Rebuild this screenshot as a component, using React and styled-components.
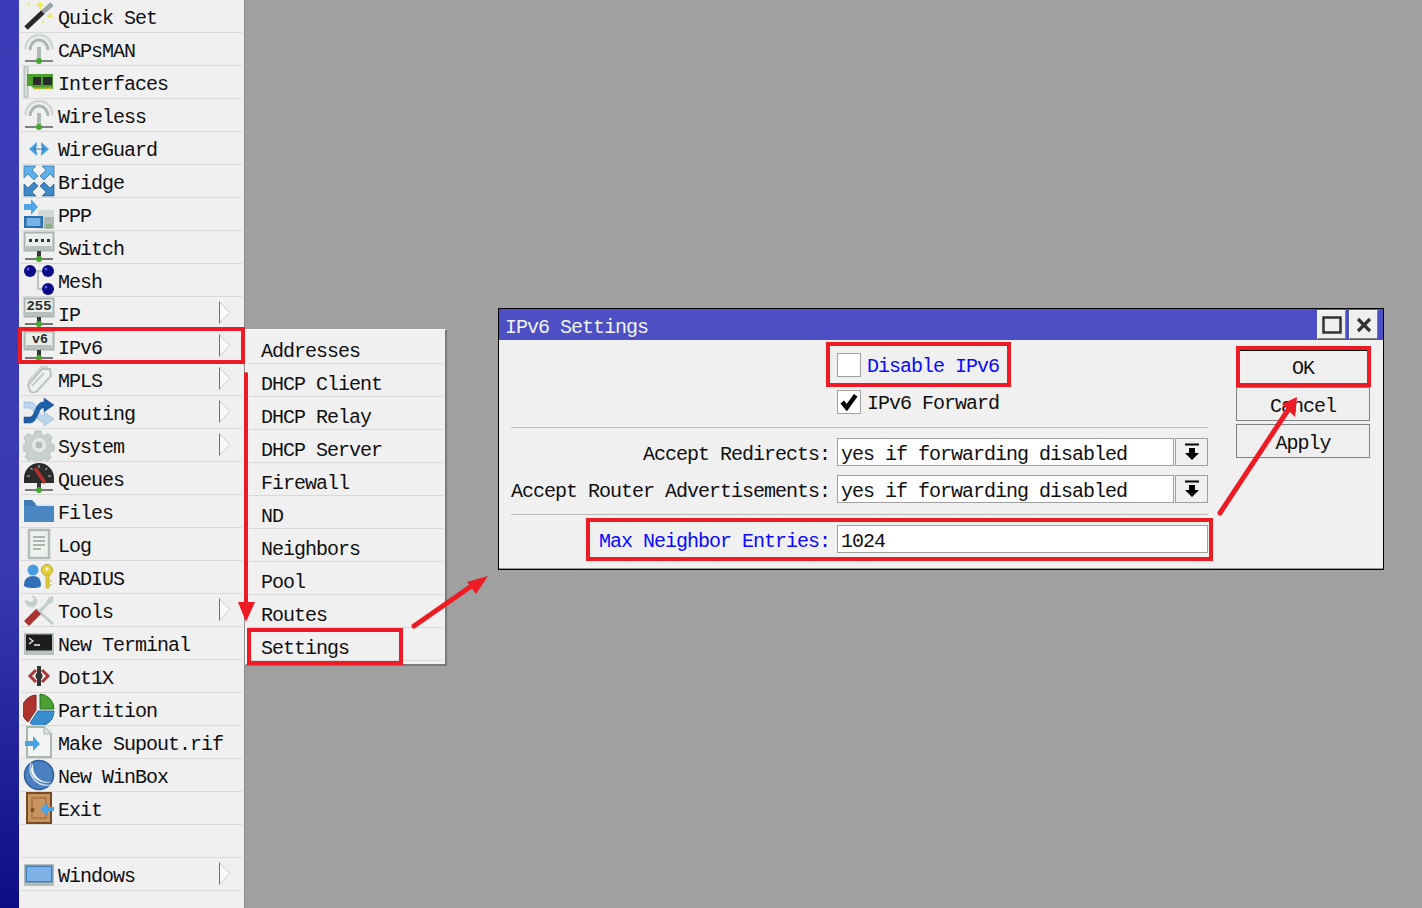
import React from 'react';
import styled, { createGlobalStyle } from 'styled-components';

const GlobalStyle = createGlobalStyle`
  html, body { margin: 0; padding: 0; background: #a0a0a0; }
  body { font-family: "Liberation Mono", "DejaVu Sans Mono", monospace; overflow: hidden; }
`;

const Page = styled.div`
  position: relative;
  display: flex;
  width: 1422px;
  height: 908px;
  overflow: hidden;
  background: #a0a0a0;
`;

const Strip = styled.div`
  width: 19px;
  flex: none;
  background: linear-gradient(180deg, #3c3cb8 0%, #3a3ab4 62%, #0d0d86 100%);
`;

const Sidebar = styled.nav`
  width: 221px;
  flex: none;
  padding: 0 2px;
  background: #f0f0f0;
  border-right: 1px solid #8c8c8c;
`;

const Row = styled.div`
  position: relative;
  display: flex;
  align-items: center;
  height: 33px;
  box-sizing: border-box;
  border-bottom: 1px solid #d8d8d8;
  color: #101010;
`;

const IconSlot = styled.svg`
  width: 32px;
  height: 32px;
  flex: none;
  margin-left: 2px;
`;

const RowLabel = styled.span`
  margin-left: 3px;
  font-size: 20px;
  letter-spacing: -1px;
  white-space: pre;
  line-height: 33px;
  padding-top: 5px;
`;

const Chevron = styled.svg`
  position: absolute;
  left: 198px;
  top: 4px;
  width: 12px;
  height: 23px;
`;

const Desktop = styled.div`
  position: relative;
  flex: 1;
`;

const SubMenu = styled.div`
  position: absolute;
  left: 0;
  top: 329px;
  width: 195px;
  height: 333px;
  padding: 1px 2px 0;
  background: #f0f0f0;
  border-top: 1px solid #fafafa;
  border-left: 1px solid #fafafa;
  border-right: 2px solid #7a7a7a;
  border-bottom: 2px solid #7a7a7a;
`;

const SubRow = styled.div`
  height: 33px;
  box-sizing: border-box;
  padding: 4px 0 0 13px;
  border-bottom: 1px solid #d8d8d8;
  font-size: 20px;
  letter-spacing: -1px;
  line-height: 33px;
  white-space: pre;
  color: #101010;
`;

const SettingsWindow = styled.section`
  position: absolute;
  left: 253px;
  top: 308px;
  width: 884px;
  height: 260px;
  background: #f0f0f0;
  border: 1px solid #000;
  display: flex;
  flex-direction: column;
`;

const TitleBar = styled.header`
  height: 31px;
  flex: none;
  display: flex;
  align-items: center;
  gap: 3px;
  padding: 0 5px 0 6px;
  background: #4c50c4;
  color: #f2f2f2;
`;

const Title = styled.span`
  flex: 1;
  font-size: 20px;
  letter-spacing: -1px;
  white-space: pre;
  padding-top: 6px;
`;

const WinButton = styled.button`
  width: 29px;
  height: 29px;
  padding: 0;
  display: flex;
  align-items: center;
  justify-content: center;
  background: #efefef;
  border: 1px solid #fff;
  border-right-color: #808080;
  border-bottom-color: #808080;
`;

const WinBody = styled.div`
  flex: 1;
  display: flex;
  padding: 0 13px 0 12px;
  border-bottom: 1px solid #9a9a9a;
`;

const Form = styled.div`
  width: 697px;
  flex: none;
  padding-top: 13px;
`;

const CheckRow = styled.label`
  display: flex;
  align-items: center;
  height: 24px;
  margin: 0 0 13px 326px;
  color: ${p => (p.$changed ? '#0a0aff' : '#101010')};
`;

const CheckBox = styled.span`
  width: 22px;
  height: 22px;
  flex: none;
  display: flex;
  align-items: center;
  justify-content: center;
  background: #fff;
  border: 1px solid #a0a0a0;
`;

const CheckText = styled.span`
  margin-left: 6px;
  font-size: 20px;
  letter-spacing: -1px;
  white-space: pre;
  padding-top: 2px;
`;

const Divider = styled.hr`
  height: 1px;
  margin: ${p => p.$top || 0}px 0 0;
  border: 0;
  background: #bdbdbd;
`;

const FieldRow = styled.div`
  display: flex;
  height: 28px;
  margin-top: ${p => p.$top}px;
`;

const FieldLabel = styled.span`
  width: 319px;
  margin-right: 7px;
  flex: none;
  text-align: right;
  font-size: 20px;
  letter-spacing: -1px;
  line-height: 34px;
  white-space: pre;
  color: ${p => (p.$changed ? '#0a0aff' : '#101010')};
`;

const Field = styled.div`
  flex: 1;
  box-sizing: border-box;
  padding-left: 3px;
  background: #fff;
  border: 1px solid #a0a0a0;
  font-size: 20px;
  letter-spacing: -1px;
  line-height: 32px;
  white-space: pre;
  color: #101010;
`;

const DropButton = styled.div`
  width: 33px;
  flex: none;
  box-sizing: border-box;
  margin-left: 1px;
  display: flex;
  align-items: center;
  justify-content: center;
  border: 1px solid #a0a0a0;
`;

const Actions = styled.div`
  width: 134px;
  flex: none;
  margin-left: 28px;
  padding-top: 10px;
  display: flex;
  flex-direction: column;
  gap: 3px;
`;

const ActionButton = styled.button`
  height: 34px;
  padding: ${p => (p.$primary ? 2 : 4)}px 0 0;
  background: #efefef;
  border: 1px solid #808080;
  border-top-color: ${p => (p.$primary ? '#000' : '#808080')};
  font-family: inherit;
  font-size: 20px;
  letter-spacing: -1px;
  color: #101010;
`;

const Annotations = styled.svg`
  position: absolute;
  left: 0;
  top: 0;
  width: 1422px;
  height: 908px;
  pointer-events: none;
`;

const IconText = styled.text`
  font-family: "Liberation Mono", monospace;
  font-weight: 700;
  font-size: 13px;
  fill: #2a2a2a;
`;

// base + pole shared by the "device on a stand" icons
const Stand = ({ y = 28, from = 20, pole = '#2e3b33' }) => (
  <>
    <path d={`M2 ${y}h28`} stroke="#4a4f4a" strokeWidth="1.5" />
    <rect x="14" y={from} width="4" height={y - from} fill={pole} />
    <circle cx="16" cy={y} r="3" fill="#4aa62e" />
  </>
);

const Antenna = () => (
  <>
    <path d="M2.500 16A13.500 14 0 0 1 29.500 16" fill="none" stroke="#cfd7d2" strokeWidth="2.500" />
    <path d="M7 17A9 10 0 0 1 25 17" fill="none" stroke="#aab5ae" strokeWidth="3" />
    <rect x="14" y="14" width="4" height="14" fill="#aebbb5" />
    <path d="M2 28h28" stroke="#55605a" strokeWidth="1.5" />
    <circle cx="16" cy="28" r="3" fill="#4aa62e" />
  </>
);

const DeviceBox = ({ children, y = 1 }) => (
  <>
    <rect x="1.500" y={y + 0.5} width="29" height="18" fill="#e9eeea" stroke="#a9b5ae" strokeWidth="2" />
    <rect x="3" y={y + 14} width="26" height="4" fill="#b7c1bb" />
    {children}
  </>
);

const icons = {
  quickset: (
    <>
      <path d="M3 28L20 12" stroke="#26282a" strokeWidth="5" />
      <path d="M20 12L29 4" stroke="#9aa3a5" strokeWidth="5" />
      <path d="M17 2v7M13.500 5h7M27 13v5M24.500 16h5" stroke="#ece85a" strokeWidth="2" />
      <path d="M5 4h2M19 22h2" stroke="#ece85a" strokeWidth="2" />
    </>
  ),
  antenna: <Antenna />,
  interfaces: (
    <>
      <rect x="1" y="1" width="4" height="30" fill="#d4dcd6" stroke="#aab5ae" />
      <path d="M4 8h26v15H11l-3-3H4z" fill="#4f9f2f" />
      <rect x="10" y="11" width="8" height="8" fill="#2b2b2b" />
      <rect x="20" y="11" width="9" height="8" fill="#2b2b2b" />
      <path d="M10 22.500h20" stroke="#e3c93a" strokeWidth="2" strokeDasharray="1.500 1" />
    </>
  ),
  wireguard: (
    <>
      <path d="M14 10L6 17l8 7v-4l-3-3 3-3z" fill="#4aa3e6" />
      <path d="M18 10l8 7-8 7v-4l3-3-3-3z" fill="#4aa3e6" />
      <path d="M11 17h10M13 15l-2 2 2 2M19 15l2 2-2 2" stroke="#2f6fb0" strokeWidth="1.200" fill="none" />
    </>
  ),
  bridge: (
    <>
      <path d="M1 1h12L9 5l6 6-4 4-6-6-4 4z" fill="#5fb0ea" stroke="#2d6da8" strokeWidth="0.700" />
      <path d="M31 1H19l4 4-6 6 4 4 6-6 4 4z" fill="#5fb0ea" stroke="#2d6da8" strokeWidth="0.700" />
      <path d="M1 31h12l-4-4 6-6-4-4-6 6-4-4z" fill="#3f88c8" stroke="#1f5a95" strokeWidth="0.700" />
      <path d="M31 31H19l4-4-6-6 4-4 6 6 4-4z" fill="#3f88c8" stroke="#1f5a95" strokeWidth="0.700" />
    </>
  ),
  ppp: (
    <>
      <path d="M1 6h7V1l7 8-7 8v-5H1z" fill="#4fa5e6" />
      <rect x="15" y="12" width="16" height="19" fill="#d2d8d4" />
      <rect x="21" y="19" width="10" height="12" fill="#b0b9b4" />
      <path d="M23 27h6M23 29h6" stroke="#6aa84f" />
      <rect x="1" y="18" width="19" height="12" fill="#2d6fae" />
      <rect x="3.500" y="20" width="14" height="8" fill="#74b4e8" />
    </>
  ),
  switch: (
    <>
      <DeviceBox y={1}>
        <path d="M6 8h3v3H6zM12 8h3v3h-3zM18 8h3v3h-3zM24 8h3v3h-3z" fill="#333" />
      </DeviceBox>
      <Stand from={20} />
    </>
  ),
  mesh: (
    <>
      <path d="M7 7h18M15 7v18h10" stroke="#b9c4be" strokeWidth="2" fill="none" />
      <circle cx="7" cy="7" r="6" fill="#0a0a8a" />
      <circle cx="25" cy="7" r="6" fill="#0a0a8a" />
      <circle cx="25" cy="25" r="6" fill="#0a0a8a" />
      <circle cx="5" cy="5" r="1.500" fill="#5a5ad0" />
      <circle cx="23" cy="5" r="1.500" fill="#5a5ad0" />
      <circle cx="23" cy="23" r="1.500" fill="#5a5ad0" />
    </>
  ),
  ip: (
    <>
      <DeviceBox>
        <IconText x="16" y="13" textAnchor="middle" textLength="25" lengthAdjust="spacingAndGlyphs">255</IconText>
      </DeviceBox>
      <Stand y={27} from={20} />
    </>
  ),
  ipv6: (
    <>
      <DeviceBox>
        <IconText x="17" y="13" textAnchor="middle" textLength="16" lengthAdjust="spacingAndGlyphs">v6</IconText>
      </DeviceBox>
      <Stand from={20} />
    </>
  ),
  mpls: (
    <>
      <path d="M5 22L19 6l8 0 1 7-14 15a5 5 0 0 1-7 0z" fill="#f1f3f1" stroke="#b9c4be" strokeWidth="2" />
      <path d="M5 19L18 4l7 0" fill="none" stroke="#ccd4cf" strokeWidth="2" />
      <path d="M9 23L21 10" stroke="#c3cdc8" strokeWidth="2" />
    </>
  ),
  routing: (
    <>
      <path d="M1 6h6c8 0 8 14 14 14v-4l10 7-10 7v-4c-9 0-9-14-15-14H1z" fill="#bcd5ea" stroke="#8fb3d1" strokeWidth="0.600" />
      <path d="M1 21h6c5 0 5-15 13-15h1V2l10 7-10 7v-4h-1c-5 0-5 15-13 15H1z" fill="#1f5fa8" stroke="#194f8e" strokeWidth="0.500" />
    </>
  ),
  system: (
    <>
      <path
        d="M13 2h6l1 4 3 1 4-2 4 4-2 4 1 3 3 1v6l-4 1-1 3 2 3-4 4-3-2-3 1-1 4h-6l-1-4-3-1-3 2-4-4 2-3-1-3-4-1v-6l3-1 1-3-2-4 4-4 4 2 3-1z"
        transform="scale(0.94)"
        fill="#c7d0cb"
        stroke="#b5bfb9"
      />
      <circle cx="16" cy="16" r="7" fill="#e6eae7" />
      <circle cx="16" cy="16" r="3.500" fill="#b3bdb7" />
    </>
  ),
  queues: (
    <>
      <path d="M1 21V16A15 15 0 0 1 31 16V21z" fill="#2b2b2b" />
      <path d="M8 6l1.500 2M16 3v3M24 6l-1.500 2M4 14h3M28 14h-3" stroke="#bbb" strokeWidth="1.200" />
      <path d="M12 6l10 15" stroke="#b8322f" strokeWidth="3.500" />
      <rect x="14" y="21" width="4" height="7" fill="#3a3a3a" />
      <path d="M2 28h28" stroke="#555" strokeWidth="1.500" />
      <circle cx="16" cy="28" r="3" fill="#4aa62e" />
    </>
  ),
  files: (
    <>
      <path d="M1 5h8l5 5h17v17H1z" fill="#3f78b5" />
      <path d="M12 9h19v2H14z" fill="#dce8f2" />
      <path d="M1 11h30v16H1z" fill="#4a86c2" />
    </>
  ),
  log: (
    <>
      <rect x="6" y="2" width="20" height="28" fill="#eef2ef" stroke="#b3bdb7" strokeWidth="2.500" />
      <path d="M10 9h12M10 13h12M10 17h12M10 21h8" stroke="#aab5ae" strokeWidth="1.800" />
    </>
  ),
  radius: (
    <>
      <circle cx="10" cy="9" r="5.500" fill="#4a9be0" />
      <path d="M1 24c0-6 4-9 9-9s8 3 8 9c0 2-2 3-8 3s-9-1-9-3z" fill="#2f6fb5" />
      <ellipse cx="24" cy="9" rx="5.500" ry="5.500" fill="#e6d23c" stroke="#b8a62a" />
      <circle cx="24" cy="8" r="1.800" fill="#f0f0f0" />
      <path d="M23 14h3v13h-3zM26 20h3M26 24h3" fill="#e0cc3a" stroke="#c9b630" />
    </>
  ),
  tools: (
    <>
      <path d="M30 2l-5 2-2 5L5 26l3 4 17-19 5-3z" fill="#c4cec8" />
      <path d="M14 14l17 15-2 2L12 16z" fill="#c4cec8" />
      <path d="M1 27l12-12 5 5L6 32z" fill="#a93230" />
      <path d="M2 6a7 7 0 0 0 9 7l3-3a7 7 0 0 0-6-9l3 4-2 3-4-1z" fill="#c4cec8" />
    </>
  ),
  terminal: (
    <>
      <rect x="1" y="6" width="30" height="22" fill="#b9c1bc" />
      <rect x="3" y="7.500" width="26" height="16" fill="#1d1d1d" />
      <path d="M6 11l4 3-4 3M11 18h6" fill="none" stroke="#eee" strokeWidth="1.300" />
    </>
  ),
  dot1x: (
    <>
      <path d="M13 10L7 16l6 6M19 10l6 6-6 6" fill="none" stroke="#a8383a" strokeWidth="3" />
      <rect x="14" y="6" width="4" height="20" fill="#333" />
      <circle cx="16" cy="16" r="3.500" fill="#333" />
    </>
  ),
  partition: (
    <>
      <path d="M13 2A15 15 0 0 0 5 29L13 17z" fill="#b0322f" stroke="#7f2422" />
      <path d="M17 1a15 15 0 0 1 14 15H17z" fill="#4aa030" stroke="#2f7020" />
      <path d="M15 18h16A15 15 0 0 1 7 30z" fill="#3a8ed0" stroke="#2a6aa5" />
    </>
  ),
  supout: (
    <>
      <path d="M4 1h17l7 7v23H4z" fill="#f2f5f3" stroke="#aab5ae" strokeWidth="2" />
      <path d="M21 1v7h7" fill="#dfe4e1" stroke="#aab5ae" />
      <path d="M2 15h8v-5l7 8-7 7v-5H2z" fill="#4aa3e6" />
    </>
  ),
  winbox: (
    <>
      <circle cx="16" cy="16" r="14.500" fill="#4a80bf" stroke="#2c5f9c" strokeWidth="1.500" />
      <path d="M10 4c-1 12 6 20 19 19-10 3-21-3-21-13z" fill="#f1f5f8" />
      <path d="M8 4c-4 12 5 24 20 22" fill="none" stroke="#dce8f2" strokeWidth="1.200" />
    </>
  ),
  exit: (
    <>
      <rect x="4" y="1" width="24" height="30" fill="#c8945f" stroke="#7a4a24" strokeWidth="2" />
      <rect x="9" y="6" width="14" height="20" fill="none" stroke="#a87242" strokeWidth="1.500" />
      <circle cx="9.500" cy="18" r="2" fill="#7a4a24" />
      <path d="M31 15h-6v-5l-8 7 8 7v-5h6z" fill="#4aa3e6" />
    </>
  ),
  windows: (
    <>
      <rect x="1" y="6" width="30" height="22" fill="#b4bcb7" />
      <rect x="2.500" y="7.500" width="27" height="17" fill="#3f7dbb" />
      <rect x="4" y="9" width="24" height="14" fill="#7fb2e6" />
    </>
  ),
};

const menuItems = [
  ['Quick Set', 'quickset'],
  ['CAPsMAN', 'antenna'],
  ['Interfaces', 'interfaces'],
  ['Wireless', 'antenna'],
  ['WireGuard', 'wireguard'],
  ['Bridge', 'bridge'],
  ['PPP', 'ppp'],
  ['Switch', 'switch'],
  ['Mesh', 'mesh'],
  ['IP', 'ip', true],
  ['IPv6', 'ipv6', true],
  ['MPLS', 'mpls', true],
  ['Routing', 'routing', true],
  ['System', 'system', true],
  ['Queues', 'queues'],
  ['Files', 'files'],
  ['Log', 'log'],
  ['RADIUS', 'radius'],
  ['Tools', 'tools', true],
  ['New Terminal', 'terminal'],
  ['Dot1X', 'dot1x'],
  ['Partition', 'partition'],
  ['Make Supout.rif', 'supout'],
  ['New WinBox', 'winbox'],
  ['Exit', 'exit'],
  ['', null],
  ['Windows', 'windows', true],
];

const subItems = ['Addresses', 'DHCP Client', 'DHCP Relay', 'DHCP Server', 'Firewall', 'ND', 'Neighbors', 'Pool', 'Routes', 'Settings'];

const SubArrow = () => (
  <Chevron viewBox="0 0 12 23">
    <path d="M0.500 1L11 11.500 0.500 22z" fill="#fafafa" stroke="#c8c8c8" />
    <path d="M0.500 0.500v22" stroke="#707070" />
  </Chevron>
);

const DropIcon = () => (
  <svg width="16" height="18" viewBox="0 0 16 18">
    <path d="M1 1.500h14" stroke="#000" strokeWidth="2" />
    <path d="M5 5h6v5h4l-7 7-7-7h4z" fill="#000" />
  </svg>
);

const red = '#ed1c24';

export default function App() {
  return (
    <Page>
      <GlobalStyle />
      <Strip />
      <Sidebar>
        {menuItems.map(([label, icon, more], i) => (
          <Row key={i}>
            {icon && <IconSlot viewBox="0 0 32 32">{icons[icon]}</IconSlot>}
            {label && <RowLabel>{label}</RowLabel>}
            {more && <SubArrow />}
          </Row>
        ))}
      </Sidebar>
      <Desktop>
        <SubMenu>
          {subItems.map(s => (
            <SubRow key={s}>{s}</SubRow>
          ))}
        </SubMenu>
        <SettingsWindow>
          <TitleBar>
            <Title>IPv6 Settings</Title>
            <WinButton aria-label="maximize">
              <svg width="20" height="20" viewBox="0 0 20 20">
                <rect x="1.500" y="2.500" width="17" height="15" fill="none" stroke="#333" strokeWidth="2.500" />
              </svg>
            </WinButton>
            <WinButton aria-label="close">
              <svg width="16" height="16" viewBox="0 0 16 16">
                <path d="M2 2l12 12M14 2L2 14" stroke="#333" strokeWidth="3.200" />
              </svg>
            </WinButton>
          </TitleBar>
          <WinBody>
            <Form>
              <CheckRow $changed>
                <CheckBox />
                <CheckText>Disable IPv6</CheckText>
              </CheckRow>
              <CheckRow>
                <CheckBox>
                  <svg width="18" height="18" viewBox="0 0 16 16">
                    <path d="M2 8l4 5 8-11" fill="none" stroke="#000" strokeWidth="4" />
                  </svg>
                </CheckBox>
                <CheckText>IPv6 Forward</CheckText>
              </CheckRow>
              <Divider />
              <FieldRow $top={10}>
                <FieldLabel>Accept Redirects:</FieldLabel>
                <Field>yes if forwarding disabled</Field>
                <DropButton><DropIcon /></DropButton>
              </FieldRow>
              <FieldRow $top={9}>
                <FieldLabel>Accept Router Advertisements:</FieldLabel>
                <Field>yes if forwarding disabled</Field>
                <DropButton><DropIcon /></DropButton>
              </FieldRow>
              <Divider $top={11} />
              <FieldRow $top={10}>
                <FieldLabel $changed>Max Neighbor Entries:</FieldLabel>
                <Field>1024</Field>
              </FieldRow>
            </Form>
            <Actions>
              <ActionButton $primary>OK</ActionButton>
              <ActionButton>Cancel</ActionButton>
              <ActionButton>Apply</ActionButton>
            </Actions>
          </WinBody>
        </SettingsWindow>
      </Desktop>
      <Annotations viewBox="0 0 1422 908">
        <g fill="none" stroke={red} strokeWidth="4">
          <rect x="20" y="329" width="223" height="33" />
          <rect x="249" y="630" width="152" height="33" />
          <rect x="828" y="344" width="181" height="41" />
          <rect x="588" y="520" width="623" height="39" />
          <rect x="1238" y="348" width="131" height="37" />
        </g>
        <g stroke={red} strokeWidth="4" strokeLinecap="round">
          <path d="M246 374V606" />
          <path d="M414 626L470 587" strokeWidth="5" />
          <path d="M1220 513L1288 410" strokeWidth="5" />
        </g>
        <g fill={red}>
          <path d="M238 602H255L246 622z" />
          <path d="M488 576L467 582L476 594z" />
          <path d="M1297 397L1282 404L1295 417z" />
        </g>
      </Annotations>
    </Page>
  );
}
